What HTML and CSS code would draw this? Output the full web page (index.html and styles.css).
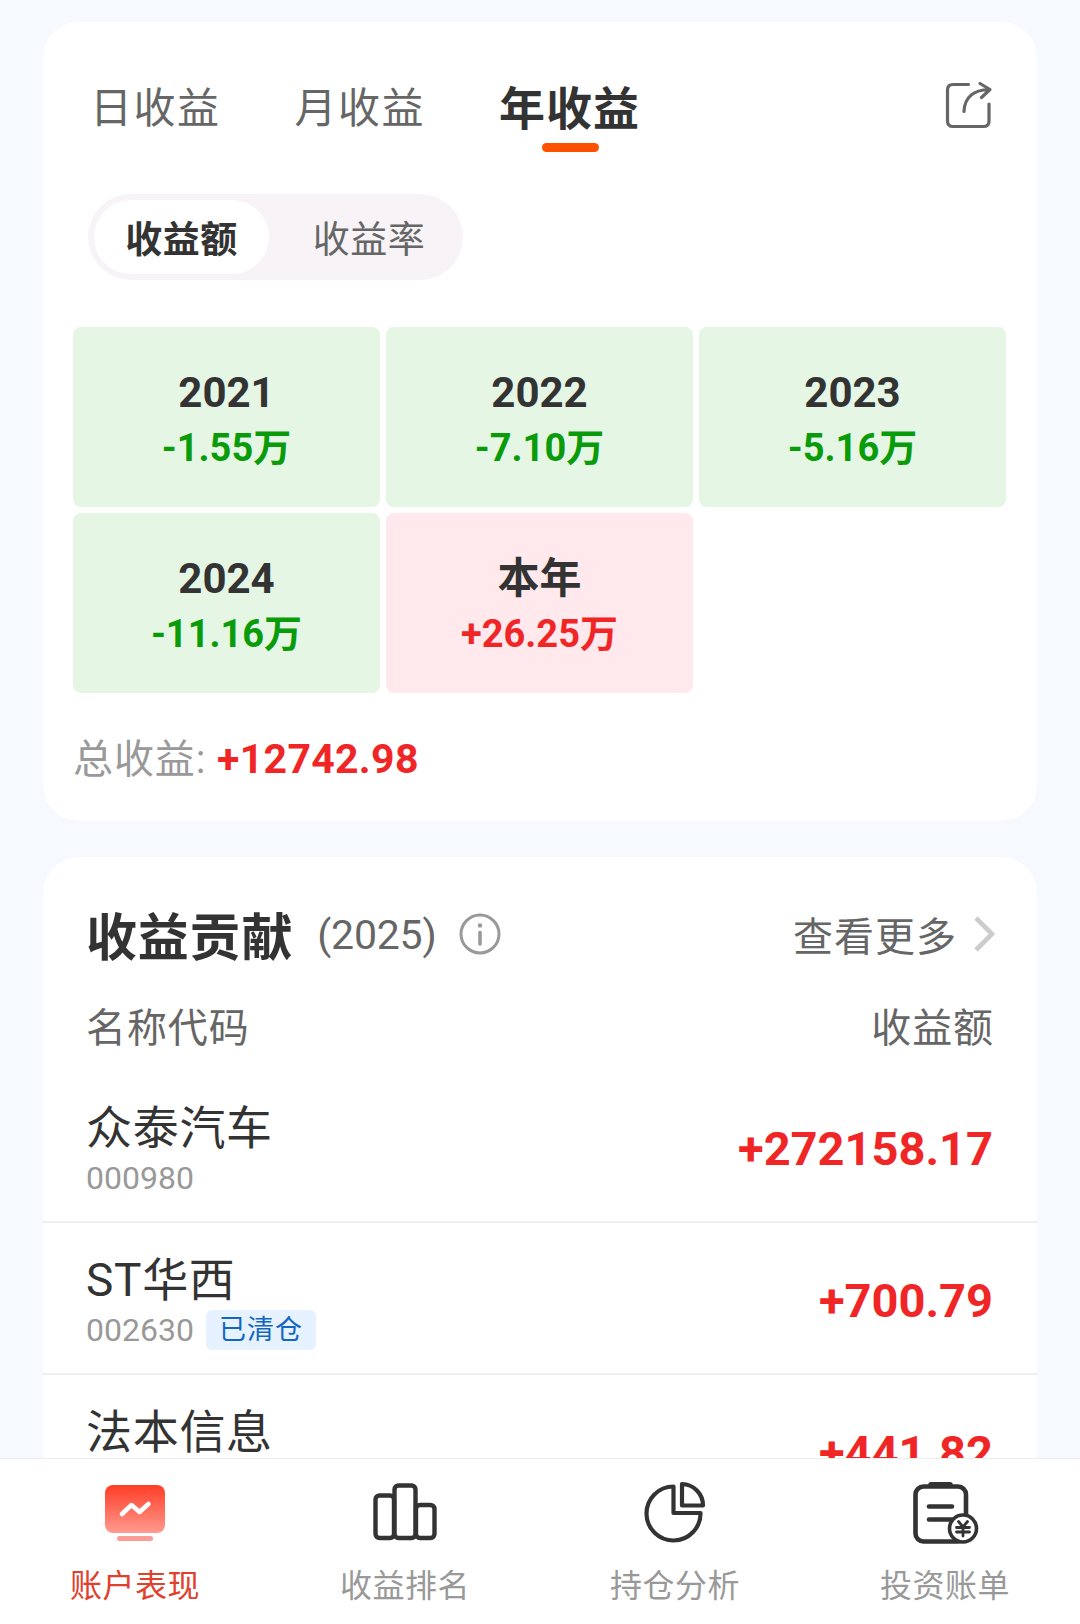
FILE: index.html
```html
<!DOCTYPE html>
<html lang="zh-CN">
<head>
    <meta charset="UTF-8">
    <title>账户表现</title>
    <meta name="viewport" content="width=device-width, initial-scale=1.0">
    <link rel="stylesheet" href="styles.css">
</head>

<body>

<main class="content">

    <section class="card income">
        <div class="tabs">
            <span class="tab">日收益</span>
            <span class="tab">月收益</span>
            <span class="tab active">年收益</span>
            <svg class="share" width="48" height="50" viewBox="0 0 48 50" fill="none" stroke="#666" stroke-width="3.200" stroke-linecap="round" stroke-linejoin="round">
                <path d="M23.500 4.500H8Q2.500 4.500 2.500 10V41Q2.500 46.500 8 46.500H38.500Q44 46.500 44 41V24"/>
                <path d="M19 31.500C19.500 17 29 10 44 9.500M35 3.500L45 9.500L36.500 17.500"/>
            </svg>
        </div>

        <div class="switch">
            <span class="option on">收益额</span>
            <span class="option">收益率</span>
        </div>

        <div class="years">
            <div class="year down"><b>2021</b><span>-1.55万</span></div>
            <div class="year down"><b>2022</b><span>-7.10万</span></div>
            <div class="year down"><b>2023</b><span>-5.16万</span></div>
            <div class="year down"><b>2024</b><span>-11.16万</span></div>
            <div class="year up"><b>本年</b><span>+26.25万</span></div>
        </div>

        <p class="total">总收益: <b>+12742.98</b></p>
    </section>

    <section class="card contribution">
        <div class="title-row">
            <h2>收益贡献</h2>
            <span class="period">(2025)</span>
            <svg class="info" width="42" height="42" viewBox="0 0 42 42">
                <circle cx="21" cy="21" r="19" fill="none" stroke="#999" stroke-width="3"/>
                <circle cx="21" cy="12.500" r="2.200" fill="#999"/>
                <path d="M21 19.500V31" stroke="#999" stroke-width="3.600" stroke-linecap="round"/>
            </svg>
            <span class="more">查看更多</span>
            <svg class="chevron" width="24" height="36" viewBox="0 0 24 36" fill="none" stroke="#ccc" stroke-width="4.600">
                <path d="M3 2L19 18L3 34"/>
            </svg>
        </div>

        <div class="list-head">
            <span>名称代码</span>
            <span>收益额</span>
        </div>

        <div class="stock">
            <div>
                <div class="name">众泰汽车</div>
                <div class="code">000980</div>
            </div>
            <div class="amount">+272158.17</div>
        </div>
        <div class="stock">
            <div>
                <div class="name">ST华西</div>
                <div class="code">002630<span class="badge">已清仓</span></div>
            </div>
            <div class="amount">+700.79</div>
        </div>
        <div class="stock">
            <div>
                <div class="name">法本信息</div>
            </div>
            <div class="amount">+441.82</div>
        </div>
    </section>

</main>

<nav class="bottom-nav">
    <a class="nav-item current">
        <svg width="90" height="90" viewBox="0 0 90 90">
            <defs>
                <linearGradient id="screen" x1="0" y1="0" x2="0" y2="1">
                    <stop offset="0" stop-color="#ff3d25"/>
                    <stop offset="1" stop-color="#ff9a8f"/>
                </linearGradient>
            </defs>
            <rect x="15" y="15" width="60" height="48" rx="8" fill="url(#screen)"/>
            <rect x="27" y="66" width="36" height="5" rx="2.500" fill="#fb9d94"/>
            <path d="M32 44L41.500 35L49.500 42L58.500 34" fill="none" stroke="#fff" stroke-width="4.500" stroke-linecap="round" stroke-linejoin="round"/>
        </svg>
        <span>账户表现</span>
    </a>
    <a class="nav-item">
        <svg width="90" height="90" viewBox="0 0 90 90" fill="none" stroke="#333" stroke-width="4.400">
            <rect x="15.500" y="25.500" width="18.500" height="42.500" rx="4"/>
            <rect x="34.500" y="15.500" width="21" height="52.500" rx="4"/>
            <rect x="56" y="35" width="18.500" height="33" rx="4"/>
        </svg>
        <span>收益排名</span>
    </a>
    <a class="nav-item">
        <svg width="90" height="90" viewBox="0 0 90 90" fill="none" stroke="#333" stroke-width="4.200" stroke-linejoin="round">
            <path d="M43.500 16.500A27 27 0 1 0 70.500 43H43.500Z"/>
            <path d="M52 14V35.500H73A21.500 21.500 0 0 0 52 14Z"/>
        </svg>
        <span>持仓分析</span>
    </a>
    <a class="nav-item">
        <svg width="90" height="90" viewBox="0 0 90 90" fill="none" stroke="#333" stroke-width="4.600" stroke-linecap="round">
            <rect x="15.500" y="16.500" width="50.500" height="55" rx="8"/>
            <path d="M31 14.800H50" stroke-width="5.500"/>
            <path d="M29 36.500H52M29 49.500H52"/>
            <circle cx="63" cy="58.500" r="13.500" fill="#fff" stroke-width="3.600"/>
            <path d="M58.500 51.500L63 57L67.500 51.500M63 57V66M56.500 57.500H69.500M56.500 62H69.500" stroke-width="2.800"/>
        </svg>
        <span>投资账单</span>
    </a>
</nav>

</body>
</html>
```
FILE: styles.css
```css
* {
    box-sizing: border-box;
}

body {
    margin: 0;
    height: 1624px;
    display: flex;
    flex-direction: column;
    overflow: hidden;
    background: #f6faff;
    color: #333;
    font-family: Roboto, "Noto Sans CJK SC", sans-serif;
}

.content {
    flex: 1;
    min-height: 0;
    overflow: hidden;
    padding: 22px 43px 0;
}

.card {
    background: white;
    border-radius: 36px;
}

.income {
    height: 799px;
    padding: 54px 30px 0;
    margin-bottom: 36px;
}

.tabs {
    display: flex;
    align-items: center;
    height: 66px;
    padding: 0 14px 0 17px;
}

.tab {
    font-size: 42px;
    letter-spacing: 1.500px;
    color: #666;
    line-height: 68px;
    margin-right: 74px;
}

.tab.active {
    position: relative;
    font-size: 46px;
    font-weight: bold;
    letter-spacing: 1px;
    color: #333;
    margin-right: 0;
}

.tab.active::after {
    content: "";
    position: absolute;
    left: 43px;
    bottom: -9px;
    width: 57px;
    height: 9px;
    border-radius: 5px;
    background: #ff5000;
}

.share {
    margin: 0 0 8px auto;
}

.switch {
    display: flex;
    width: 375px;
    height: 86px;
    padding: 6px;
    margin: 52px 0 47px 15px;
    border-radius: 43px;
    background: #f7f3f7;
}

.option {
    width: 175px;
    height: 74px;
    line-height: 82px;
    border-radius: 37px;
    text-align: center;
    font-size: 37px;
    letter-spacing: 0.500px;
    color: #666;
}

.option + .option {
    width: 188px;
    padding-left: 12px;
}

.option.on {
    background: white;
    color: #333;
    font-weight: bold;
}

.years {
    display: grid;
    grid-template-columns: repeat(3, 1fr);
    grid-auto-rows: 180px;
    gap: 6px;
    width: 933px;
}

.year {
    display: flex;
    flex-direction: column;
    align-items: center;
    padding-top: 38px;
    border-radius: 8px;
}

.year b {
    font-size: 42px;
    line-height: 56px;
}

.year span {
    font-size: 38px;
    font-weight: bold;
    line-height: 55px;
}

.down {
    background: #e5f6e5;
}

.down span {
    color: #0a9b0a;
}

.up {
    background: #ffe9ed;
}

.up span {
    color: #f02626;
}

.total {
    margin: 36px 0 0;
    font-size: 40px;
    letter-spacing: 0.900px;
    line-height: 60px;
    color: #999;
}

.total b {
    font-size: 41px;
    letter-spacing: 0.300px;
    color: #f02626;
}

.contribution {
    height: 800px;
    padding-top: 44px;
}

.title-row {
    display: flex;
    align-items: center;
    height: 66px;
    padding: 0 40px 0 43px;
}

h2 {
    margin: 0;
    font-size: 51px;
    letter-spacing: 0.800px;
}

.period {
    margin: 2px 0 0 24px;
    font-size: 41px;
    letter-spacing: -0.200px;
    color: #666;
}

.info {
    margin-left: 23px;
}

.more {
    margin-left: auto;
    font-size: 40px;
    letter-spacing: 1px;
    color: #666;
}

.chevron {
    margin-left: 16px;
}

.list-head {
    display: flex;
    justify-content: space-between;
    padding: 0 43px 0 43px;
    margin: 32px 0 12px;
    font-size: 40px;
    letter-spacing: 0.900px;
    line-height: 60px;
    color: #666;
}

.stock {
    display: flex;
    justify-content: space-between;
    height: 152px;
    padding: 27px 44px 0 43px;
    border-bottom: 2px solid #eee;
}

.name {
    font-size: 46px;
    letter-spacing: 0.700px;
    line-height: 60px;
}

.code {
    display: flex;
    align-items: center;
    height: 40px;
    font-size: 32px;
    line-height: 42px;
    color: #999;
}

.badge {
    width: 110px;
    margin-left: 12px;
    border-radius: 6px;
    background: #e6f2ff;
    color: #1467bd;
    font-size: 27px;
    letter-spacing: 1px;
    line-height: 40px;
    text-align: center;
}

.amount {
    font-size: 47px;
    font-weight: bold;
    line-height: 101px;
    color: #f02626;
}

.bottom-nav {
    display: flex;
    height: 166px;
    background: white;
    border-top: 1px solid #eceef0;
}

.nav-item {
    flex: 1;
    display: flex;
    flex-direction: column;
    align-items: center;
    padding-top: 11px;
    font-size: 32px;
    letter-spacing: 0.500px;
    line-height: 52px;
    color: #999;
}

.nav-item.current {
    color: #e0402c;
}
```
